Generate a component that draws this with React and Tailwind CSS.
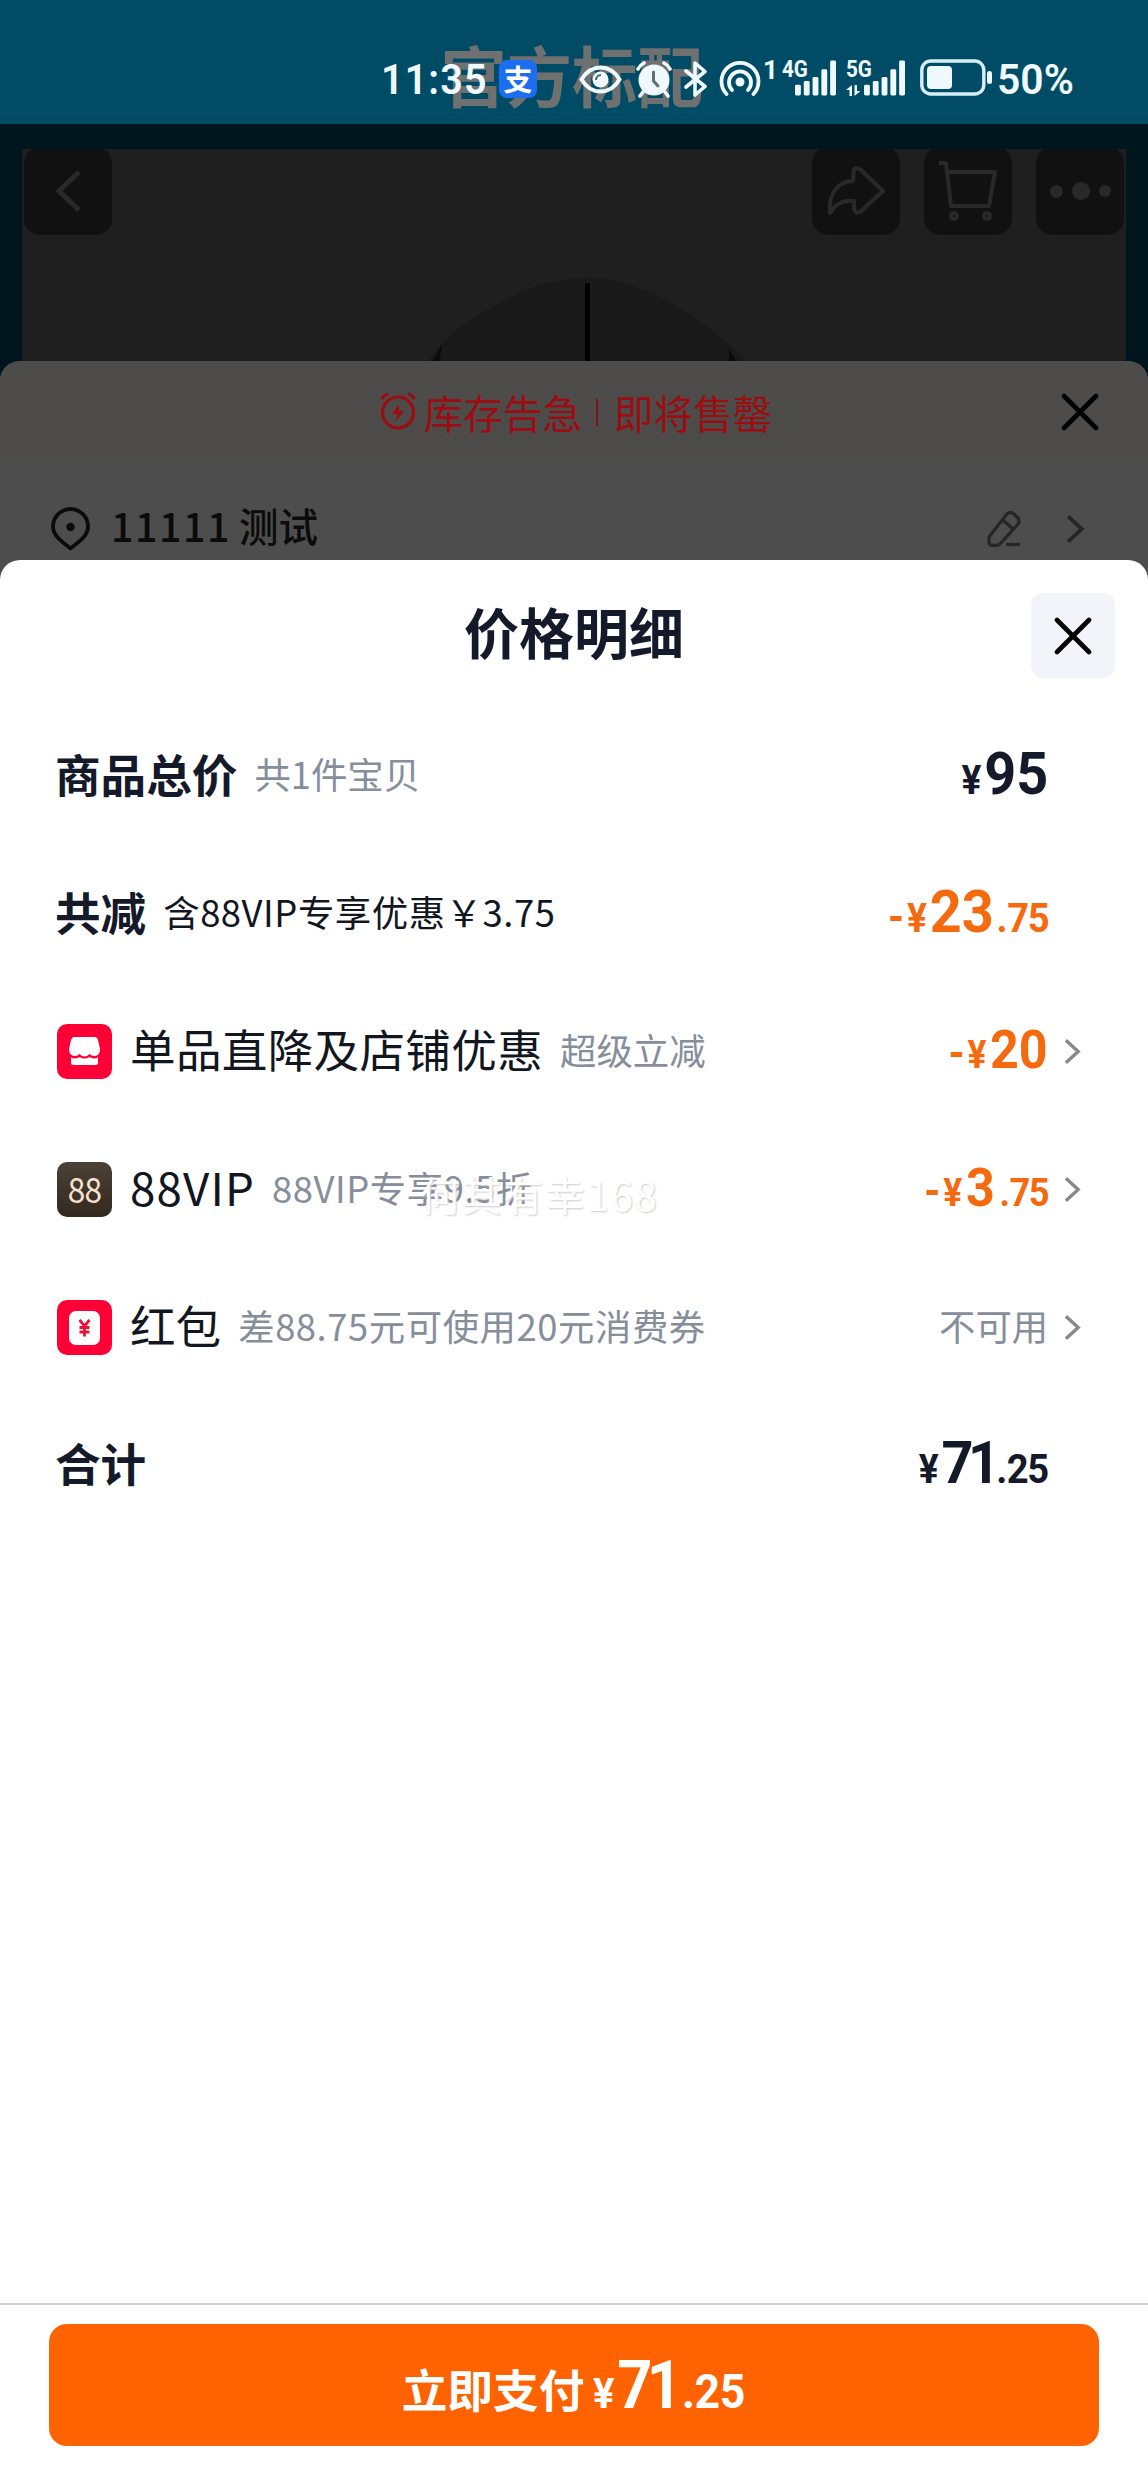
import React from 'react';

const rows = [
  {
    label: '商品总价',
    bold: true,
    note: '共1件宝贝',
    price: { whole: '95' },
  },
  {
    label: '共减',
    bold: true,
    note: '含88VIP专享优惠￥3.75',
    noteDark: true,
    wide: true,
    price: { minus: true, whole: '23', cents: '75' },
  },
  {
    icon: 'shop',
    label: '单品直降及店铺优惠',
    note: '超级立减',
    price: { minus: true, whole: '20', small: true },
    arrow: true,
  },
  {
    icon: 'vip',
    label: '88VIP',
    note: '88VIP专享9.5折',
    wide: true,
    price: { minus: true, whole: '3', cents: '75', small: true },
    arrow: true,
  },
  {
    icon: 'packet',
    label: '红包',
    note: '差88.75元可使用20元消费券',
    wide: true,
    text: '不可用',
    arrow: true,
  },
  {
    label: '合计',
    bold: true,
    price: { whole: '71', cents: '25', tight: true },
  },
];

const Cross = ({ className }) => (
  <svg className={className} viewBox="0 0 38 38" fill="none" stroke="#000" strokeWidth="4.6" strokeLinecap="round">
    <path d="M3 3 35 35M35 3 3 35" />
  </svg>
);

const Chevron = ({ className }) => (
  <svg className={className} viewBox="0 0 18 28" fill="none" stroke="currentColor" strokeWidth="3.6">
    <path d="M2 2 15 14 2 26" />
  </svg>
);

const Signal = ({ className }) => (
  <svg className={className} viewBox="0 0 42 36" fill="#eefaff">
    <rect x="0" y="25" width="6" height="11" rx="1.5" />
    <rect x="9" y="21" width="6" height="15" rx="1.5" />
    <rect x="18" y="17" width="6" height="19" rx="1.5" />
    <rect x="27" y="9" width="6" height="27" rx="1.5" />
    <rect x="36" y="0" width="6" height="36" rx="1.5" />
  </svg>
);

const StatusBar = () => (
  <div className="relative h-[124px] bg-[#004c66] text-[#eefaff] font-['Roboto','Noto_Sans_CJK_SC',sans-serif]">
    {/* Page title showing through the status bar */}
    <div className="absolute left-[441px] top-[41px] text-[65.500px] leading-[66px] font-bold text-[#6f7070] font-['Noto_Sans_CJK_SC',sans-serif] whitespace-nowrap">
      官方标配
    </div>

    <div className="relative flex items-start pt-[59px] pl-[381px]">
      <span className="w-[118px] text-[42px] leading-[41px] font-semibold tracking-[1.2px] origin-left scale-x-[.94]">11:35</span>
      <span className="mt-px w-[38px] h-[38px] rounded-[8px] bg-[#1c6ef0] text-white text-[29px] leading-[36px] font-bold text-center font-['Noto_Sans_CJK_SC',sans-serif]">
        支
      </span>

      {/* Eye */}
      <svg className="ml-[42px] mt-[6px] w-[43px] h-[29px]" viewBox="0 0 43 29" fill="none" stroke="#eefaff" strokeWidth="4">
        <path d="M2.5 14.5C12-1.5 31-1.5 40.5 14.5 31 30.500 12 30.500 2.500 14.500Z" />
        <circle cx="21.500" cy="14.500" r="8" fill="#eefaff" stroke="none" />
        <path d="M17 15a5 5 0 0 1 5-5" stroke="#3c6676" strokeWidth="2" />
      </svg>

      {/* Alarm */}
      <svg className="ml-[14px] mt-[2px] w-[36px] h-[37px]" viewBox="0 0 36 37" fill="none" stroke="#eefaff" strokeWidth="3.600" strokeLinecap="round">
        <circle cx="18" cy="19" r="15.500" fill="#eefaff" stroke="none" />
        <path d="M2 8Q4 4 8 2M34 8Q32 4 28 2M7 31 4 35M29 31 32 35" />
        <path d="M17.500 11V20L22 25" stroke="#5f6f75" strokeWidth="3" />
      </svg>

      {/* Bluetooth */}
      <svg className="ml-[12px] mt-[2px] w-[24px] h-[36px]" viewBox="0 0 24 36" fill="none" stroke="#eefaff" strokeWidth="3.600" strokeLinejoin="round" strokeLinecap="round">
        <path d="M2 10 21 25.500 11 34V2L21 10.500 2 26" />
      </svg>

      {/* Hotspot */}
      <svg className="ml-[11px] mt-[2px] w-[42px] h-[35px]" viewBox="0 0 42 35" fill="none" stroke="#eefaff" strokeWidth="3.800" strokeLinecap="round">
        <path d="M7.500 33A18.500 18.500 0 1 1 34.500 33" />
        <path d="M13 29A11 11 0 1 1 29 29" />
        <circle cx="21" cy="21" r="4.500" fill="#eefaff" stroke="none" />
      </svg>

      <span className="ml-[2px] w-[19px] text-[26px] leading-[22px] font-bold">1</span>

      <div className="relative w-[64px] h-[38px]">
        <span className="absolute left-0 top-0 text-[24px] leading-[20px] font-bold origin-left scale-x-[.86]">4G</span>
        <Signal className="absolute left-[13px] top-px w-[41px] h-[36px]" />
      </div>
      <div className="relative w-[74px] h-[38px]">
        <span className="absolute left-0 top-0 text-[24px] leading-[20px] font-bold origin-left scale-x-[.86]">5G</span>
        <svg className="absolute left-0 top-[26px] w-[15px] h-[11px]" viewBox="0 0 15 11" fill="#eefaff">
          <path d="M0 5 6 0V11H3.500V5ZM14.500 6 8.500 11V0H11V6Z" />
        </svg>
        <Signal className="absolute left-[18px] top-px w-[41px] h-[36px]" />
      </div>

      {/* Battery */}
      <svg className="w-[73px] h-[37px]" viewBox="0 0 73 37" fill="none">
        <rect x="1.800" y="2" width="62" height="33" rx="9" stroke="#d8eef6" strokeWidth="3.400" />
        <rect x="7" y="7" width="25" height="23" rx="4" fill="#eefaff" />
        <rect x="67" y="12" width="5" height="13" rx="2.500" fill="#eefaff" />
      </svg>
      <span className="ml-[4px] text-[43px] leading-[41px] font-semibold origin-left scale-x-[.95]">50%</span>
    </div>
  </div>
);

// Dimmed product page header
const ProductHeader = () => (
  <div className="relative h-[260px] pt-[25px] px-[22px] bg-[#00161e]">
    <div className="relative h-full bg-[#1f1f1f] overflow-hidden">
      <svg className="absolute left-[400px] top-[125px] w-[340px] h-[110px]" viewBox="0 0 340 110">
        <path d="M5 110V90C20 62 55 40 95 20 130 3 175 0 205 10 250 24 290 52 324 87V110Z" fill="#191919" />
        <path d="M10 88Q17 76 20 70L17 92H10ZM307 75 316 90H307Z" fill="#0b0b0b" />
        <path d="M165.500 9V110" stroke="#000" strokeWidth="5" />
      </svg>
      <div className="relative flex -mt-[2px] pl-[2px] pr-[2px] text-[#292929]">
        <div className="w-[88px] h-[88px] rounded-[16px] bg-[#111] flex items-center justify-center">
          <svg className="w-[26px] h-[44px]" viewBox="0 0 26 44" fill="none" stroke="currentColor" strokeWidth="5">
            <path d="M24 3 4 22 24 41" />
          </svg>
        </div>
        <div className="ml-auto flex gap-6">
          <div className="w-[88px] h-[88px] rounded-[16px] bg-[#111] flex items-center justify-center">
            <svg className="w-[60px] h-[50px]" viewBox="0 0 60 50" fill="none" stroke="currentColor" strokeWidth="4" strokeLinejoin="round">
              <path d="M28 3Q31 1 35 4L57 25 34 46Q29 48 28 43V35C18 34 10 37 4 47 2 28 12 15 27 15Z" />
            </svg>
          </div>
          <div className="w-[88px] h-[88px] rounded-[16px] bg-[#111] flex items-center justify-center">
            <svg className="w-[62px] h-[62px]" viewBox="0 0 62 62" fill="none" stroke="currentColor" strokeWidth="4" strokeLinejoin="round">
              <path d="M2 3H9L14 46H52L58 12H10" />
              <circle cx="17" cy="56" r="3" />
              <circle cx="50" cy="56" r="3" />
            </svg>
          </div>
          <div className="w-[88px] h-[88px] rounded-[16px] bg-[#111] flex items-center justify-center gap-[9px]">
            <span className="w-[13px] h-[13px] rounded-full bg-[#292929]"></span>
            <span className="w-[18px] h-[18px] rounded-full bg-[#292929]"></span>
            <span className="w-[12px] h-[12px] rounded-full bg-[#292929]"></span>
          </div>
        </div>
      </div>
    </div>
  </div>
);

// Dimmed order sheet
const OrderSheet = () => (
  <div className="relative -mt-[23px] h-[225px] rounded-t-[20px] bg-[#4d4d4d]">
    <div className="relative h-[97px] rounded-t-[20px] bg-linear-to-b from-[#4d4c4c] to-[#4d4b48] pt-[5px] pl-[4px] flex items-center justify-center text-[#9c0c10]">
      <svg className="w-[36px] h-[38px] mb-[2px]" viewBox="0 0 36 38" fill="none" stroke="currentColor" strokeWidth="3.200">
        <circle cx="18" cy="20.500" r="15.500" />
        <path d="M1.500 7Q4 3 8 2M34.500 7Q32 3 28 2" />
        <path d="M19 12 12 22H17L16 29 24 19H19Z" fill="currentColor" stroke="none" />
      </svg>
      <span className="ml-[8px] text-[39.600px] leading-[50px]">库存告急</span>
      <span className="ml-[14px] mr-[16px] w-[2px] h-[27px] bg-[#7c1416]"></span>
      <span className="text-[39.600px] leading-[50px]">即将售罄</span>
      <Cross className="absolute right-[49px] top-[32px] w-[38px] h-[38px]" />
    </div>

    <div className="flex items-center h-[102px] pt-[36px] pl-[51px] pr-[63px]">
      <svg className="w-[39px] h-[44px] mt-[4px]" viewBox="0 0 39 44" fill="none" stroke="#0b0b0b" strokeWidth="3.800">
        <path d="M19.500 41.500C15 37 2 30.500 2 19.500A17.500 17.500 0 0 1 37 19.500C37 30.500 24 37 19.500 41.500Z" strokeLinejoin="round" />
        <circle cx="19.500" cy="20" r="4.200" fill="#0b0b0b" stroke="none" />
      </svg>
      <span className="ml-[21px] -mt-[4px] text-[39.500px] leading-[44px] font-medium text-[#0b0b0b]">
        <span className="tracking-[1.500px]">11111</span>
        <span className="ml-[8px]">测试</span>
      </span>
      <svg className="ml-auto mt-[3px] w-[34px] h-[37px]" viewBox="0 0 34 37" fill="none" stroke="#262626" strokeWidth="3.200" strokeLinejoin="round">
        <path d="M2 27 20 4Q23 1 27 4L31 8Q33 11 31 14L13 34Q12 35.300 9 35.300H5Q2 35 2 32ZM16 10 26 19" />
        <path d="M19 34.500H33" />
      </svg>
      <Chevron className="ml-[45px] mt-[3px] w-[19px] h-[30px] text-[#262626]" />
    </div>
  </div>
);

const RowIcon = ({ name }) => {
  if (name === 'shop') {
    return (
      <svg className="w-[55px] h-[55px] mr-[18px]" viewBox="0 0 55 55">
        <rect width="55" height="55" rx="10" fill="#ff0036" />
        <path d="M17 13H38Q40 13 41 16L43 25Q43 32 37.500 32 34 32 32.500 30 30 32.500 27.500 32.500 25 32.500 22.500 30 21 32 17.500 32 12 32 12 25L14 16Q15 13 17 13Z" fill="#fff" />
        <path d="M14 33.500Q19 35.500 22.500 33 27.500 36 32.500 33 36 35.500 41 33.500V38.500Q41 41 38.500 41H16.500Q14 41 14 38.500Z" fill="#fff" />
      </svg>
    );
  }
  if (name === 'vip') {
    return (
      <span className="w-[55px] h-[55px] mr-[18px] rounded-[10px] bg-linear-to-b from-[#4b4136] to-[#33291f] text-[#f6e2cd] text-[35px] leading-[51px] text-center tracking-[-1px]">
        <span className="inline-block scale-x-[.9]">88</span>
      </span>
    );
  }
  return (
    <svg className="w-[55px] h-[55px] mr-[18px]" viewBox="0 0 55 55">
      <rect width="55" height="55" rx="10" fill="#ff0036" />
      <rect x="12" y="11" width="31" height="34" rx="7" fill="#fff" />
      <path d="M22.500 20 27.500 26 32.500 20M27.500 26V36.500M22.500 27.500H32.500M22.500 32H32.500" fill="none" stroke="#e8133c" strokeWidth="2.800" />
    </svg>
  );
};

const Price = ({ minus, whole, cents, small, tight }) => (
  <span className={`-mt-[3px] inline-flex items-baseline font-bold leading-none origin-right scale-x-[.93] font-['Roboto',sans-serif] ${minus ? 'text-[#f5690f]' : 'text-[#141a2a]'}`}>
    {minus && <span className="text-[44px] mr-[3px]">-</span>}
    <span className={small ? 'text-[38px] mr-[4px]' : 'text-[40px] mr-[3px]'}>¥</span>
    <span className={`${small ? 'text-[54px]' : 'text-[60px]'} ${tight ? 'tracking-[-6px]' : ''}`}>{whole}</span>
    {cents && (
      <span className={`tracking-[-1.500px] ${small ? 'text-[39px] ml-[5px]' : 'text-[41px]'} ${tight ? 'ml-[2px]' : 'ml-[3px]'}`}>
        <span className="mr-[1px]">.</span>{cents}
      </span>
    )}
  </span>
);

const Row = ({ icon, label, bold, note, noteDark, wide, price, text, arrow }) => (
  <div className={`flex items-center h-[137.800px] whitespace-nowrap ${icon ? 'pl-[57px]' : 'pl-[55px]'}`}>
    {icon && <RowIcon name={icon} />}
    <span className={`-mt-[6px] text-[45.600px] leading-[60px] ${bold ? 'font-bold text-[#141a2a]' : 'text-[#12161f]'} ${icon === 'vip' ? 'tracking-[1.200px]' : ''} ${icon === 'shop' ? 'tracking-[.3px]' : ''}`}>
      {label}
    </span>
    {note && (
      <span className={`-mt-[5px] ml-[17px] text-[36.400px] leading-[60px] ${wide ? 'tracking-[.55px]' : ''} ${noteDark ? 'text-[#12161f]' : 'text-[#868e9b]'}`}>{note}</span>
    )}
    <div className="ml-auto flex items-center">
      {price && <Price {...price} />}
      {text && <span className="-mt-[4px] text-[36.300px] leading-[60px] text-[#868e9b]">{text}</span>}
      <div className="w-[100px] pl-[16px] text-[#888]">
        {arrow && <Chevron className="w-[17px] h-[27px]" />}
      </div>
    </div>
  </div>
);

export default function App() {
  return (
    <div className="w-[1148px] h-[2492px] overflow-hidden flex flex-col bg-white font-['Noto_Sans_CJK_SC',sans-serif]">
      <StatusBar />
      <ProductHeader />
      <OrderSheet />

      {/* Price detail sheet */}
      <div className="relative -mt-[26px] flex-1 flex flex-col rounded-t-[20px] bg-white">
        <div className="relative h-[147px] flex justify-center pt-[35px]">
          <h1 className="text-[55px] leading-[70px] font-bold text-[#141a2a]">价格明细</h1>
          <button className="absolute right-[33px] top-[33px] w-[84px] h-[85px] rounded-[12px] bg-[#f1f4f8] flex items-center justify-center">
            <Cross className="w-[38px] h-[38px]" />
          </button>
        </div>

        {rows.map((row) => (
          <Row key={row.label} {...row} />
        ))}

        {/* Watermark */}
        <div className="absolute left-[420px] top-[606px] text-[40px] leading-[56px] tracking-[1.700px] text-white whitespace-nowrap [text-shadow:1px_1px_2px_#ccc]">
          何其有幸168
        </div>

        <div className="mt-auto h-[189px] border-t-2 border-[#d0d0d0] pt-[19px] px-[49px]">
          <button className="w-full h-[122px] rounded-[18px] bg-[#ff6200] text-white flex items-baseline justify-center pt-[29px]">
            <span className="text-[45.700px] leading-[60px] font-bold">立即支付</span>
            <span className="ml-[9px] w-[153px] inline-flex items-baseline leading-none font-bold origin-left scale-x-[.93] font-['Roboto',sans-serif]">
              <span className="text-[43px] mr-[3px]">¥</span>
              <span className="text-[66px] tracking-[-6px]">71</span>
              <span className="text-[48px] ml-[6px] tracking-[-.5px]">.25</span>
            </span>
          </button>
        </div>
      </div>
    </div>
  );
}
